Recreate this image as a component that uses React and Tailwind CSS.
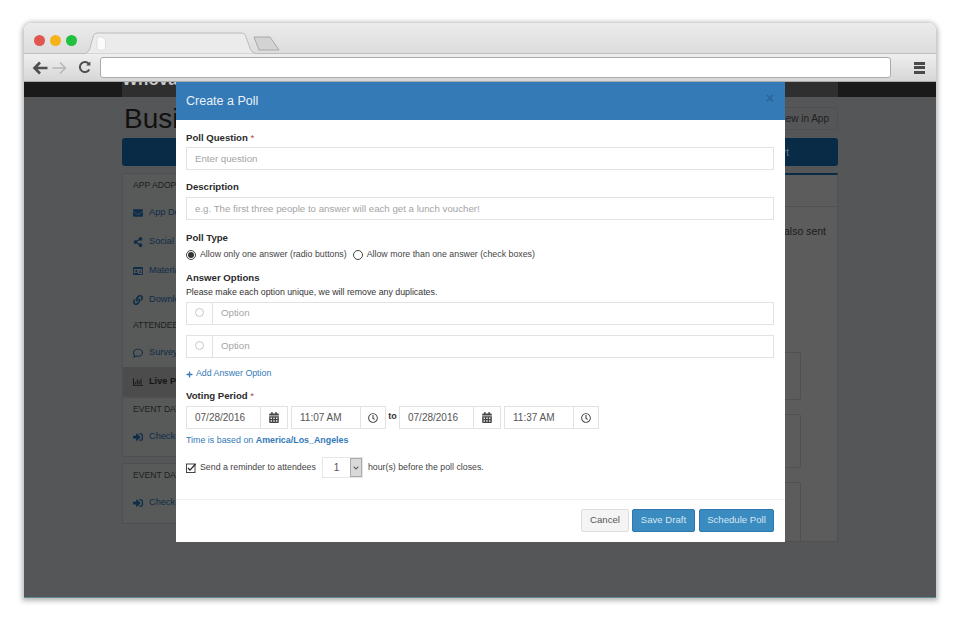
import React from "react";
import { FaEnvelope, FaShareAlt, FaRegIdCard, FaLink, FaRegComment, FaRegChartBar, FaSignInAlt, FaCalendarAlt, FaRegClock, FaPlus, FaChevronDown } from "react-icons/fa";

const Section = ({ title, className = "h-[24px] pb-[2px]" }) => (
  <div className={`flex items-center pl-[10px] text-[8.6px] text-[#1d1e1f] whitespace-nowrap ${className}`}>{title}</div>
);
const Item = ({ icon: Icon, label, active }) => (
  <div className={`h-[29px] flex items-center pl-[10px] gap-[6px] text-[9.2px] ${active ? "bg-[#4c4c4c] text-[#151515] font-bold" : "text-[#0f2d48]"}`}>
    <Icon className="w-[10px] h-[10px] shrink-0" />
    <span className="whitespace-nowrap">{label}</span>
  </div>
);
const Field = ({ placeholder }) => (
  <input readOnly placeholder={placeholder} className="block w-full h-[23px] border border-[#e0e2e5] px-[8px] text-[9.7px] text-[#555] placeholder:text-[#a4a4a4] outline-none bg-white" />
);
const Label = ({ children, req, className = "" }) => (
  <div className={`text-[9.6px] leading-[12px] font-bold text-[#2b2b2b] ${className}`}>
    {children}{req && <span className="text-[#a94442] font-normal"> *</span>}
  </div>
);
const OptionRow = () => (
  <div className="flex h-[23px] border border-[#e0e2e5]">
    <div className="w-[26px] shrink-0 border-r border-[#e0e2e5] flex justify-center pt-[5px]">
      <span className="w-[9px] h-[9px] rounded-full border border-[#c8c8c8]" />
    </div>
    <div className="flex-1 flex items-center pl-[8px] text-[9.7px] text-[#a4a4a4]">Option</div>
  </div>
);
const Radio = ({ checked, children }) => (
  <div className="flex items-center gap-[4px] text-[8.8px] text-[#444] whitespace-nowrap">
    <span className="w-[10px] h-[10px] rounded-full border border-[#444] flex items-center justify-center">
      {checked && <span className="w-[6px] h-[6px] rounded-full bg-[#333]" />}
    </span>
    {children}
  </div>
);
const Stamp = ({ value, icon: Icon, w, addon, iconSize }) => (
  <div className={`flex h-[23px] border border-[#e0e2e5] text-[10px] text-[#555] ${w}`}>
    <div className="flex-1 flex items-center pl-[8px] whitespace-nowrap">{value}</div>
    <div className={`border-l border-[#e0e2e5] flex items-center justify-center text-[#444] ${addon}`}>
      <Icon className={iconSize} />
    </div>
  </div>
);

export default function App() {
  return (
    <div className="w-[960px] h-[640px] bg-white pt-[23px] pl-[24px] overflow-hidden" style={{ fontFamily: '"Liberation Sans", Arial, sans-serif' }}>
      <div className="relative w-[912px] h-[575px] rounded-t-[8px] shadow-[0_1px_5px_2px_rgba(0,0,0,0.28)] border-b border-b-[#5f8a8e] flex flex-col">
        {/* title bar */}
        <div className="h-[31px] shrink-0 rounded-t-[8px] bg-gradient-to-b from-[#ececec] to-[#dcdcdc] border-b border-[#bdbdbd] relative flex items-start pl-[10px] pt-[12px] gap-[5px]">
          <span className="w-[11px] h-[11px] rounded-full bg-[#e0574f]" />
          <span className="w-[11px] h-[11px] rounded-full bg-[#f5b21b]" />
          <span className="w-[11px] h-[11px] rounded-full bg-[#22c03f]" />
          <svg className="absolute left-[60px] top-[9px]" width="200" height="22" viewBox="0 0 200 22" fill="none">
            <path d="M1 22 L2 20.5 C4 20 5 19 6 16 L9 5 C10 2 11 1 14 1 H157 C160 1 161 2 162 5 L166 16 C167 19 168 20.5 171 21 L172 22 Z" fill="#ebebeb" stroke="#bcbcbc" />
            <path d="M170 5 H186 L195 18 H175 Z" fill="#d3d3d3" stroke="#a8a8a8" strokeLinejoin="round" />
            <path d="M13 5 H18.5 L21.5 8 V18 H13 Z" fill="#fbfbfb" stroke="#dedede" />
          </svg>
        </div>
        {/* toolbar */}
        <div className="h-[28px] shrink-0 bg-gradient-to-b from-[#efefef] to-[#d6d6d6] border-b border-[#aaa] flex items-center pl-[8px] pr-[10px]">
          <svg width="16" height="14" viewBox="0 0 16 14" fill="none" stroke="#4f4f4f" strokeWidth="2.6"><path d="M15.5 7 H2.5 M8 1.5 L2.5 7 L8 12.5" /></svg>
          <svg className="ml-[4px]" width="16" height="14" viewBox="0 0 16 14" fill="none" stroke="#b5b5b5" strokeWidth="1.4"><path d="M0.5 7 H13.5 M8 1.5 L13.5 7 L8 12.5" /></svg>
          <svg className="ml-[10px]" width="13" height="13" viewBox="0 0 13 13" fill="none" stroke="#4f4f4f" strokeWidth="2"><path d="M11 3.2 A5 5 0 1 0 11.3 8.5" /><path d="M8 4.6 H12.4 V0.4 Z" fill="#4f4f4f" stroke="none" /></svg>
          <div className="ml-[9px] w-[791px] h-[21px] bg-white border border-[#aaa] rounded-[3px]" />
          <div className="ml-[23px] w-[11px] flex flex-col gap-[1.5px]">
            <span className="h-[3px] bg-[#4a4a4a]" /><span className="h-[3px] bg-[#4a4a4a]" /><span className="h-[3px] bg-[#4a4a4a]" />
          </div>
        </div>
        {/* dimmed page */}
        <div className="flex-1 bg-[#555657] overflow-hidden">
          <div className="h-[15px] bg-[#1a1a1a]">
            <div className="ml-[98px] w-[716px] h-[15px] bg-[#2f2f2f] overflow-hidden">
              <div className="text-[17px] leading-[17px] font-bold text-[#c9c9c9] mt-[-11px]">Whova</div>
            </div>
          </div>
          <div className="ml-[98px] w-[716px]">
            <div className="h-[41px] flex justify-between">
              <div className="text-[28px] leading-[32px] text-[#111] pt-[6px] pl-[2px]">Business</div>
              <div className="mt-[10px] h-[23px] px-[8px] border border-[#505050] rounded-[3px] flex items-center text-[10px] text-[#202020]">View in App</div>
            </div>
            <div className="h-[28px] rounded-[3px] bg-[#0a2b45] flex items-center justify-end pr-[49px] text-[10px] text-[#5f7485]">Export</div>
            <div className="flex gap-[14px] mt-[7px] items-start">
              <div className="w-[180px]">
                <div className="border border-[#4f4f4f] bg-[#585959] rounded-[2px]">
                  <Section title="APP ADOPTION" />
                  <Item icon={FaEnvelope} label="App Download" />
                  <Item icon={FaShareAlt} label="Social Media" />
                  <Item icon={FaRegIdCard} label="Materials" />
                  <Item icon={FaLink} label="Downloads" />
                  <Section title="ATTENDEE" className="h-[24px] pb-[1px]" />
                  <Item icon={FaRegComment} label="Surveys" />
                  <Item icon={FaRegChartBar} label="Live Polls" active />
                </div>
                <div className="border border-[#4f4f4f] bg-[#585959] rounded-[2px] pb-[5px]">
                  <Section title="EVENT DAY" />
                  <Item icon={FaSignInAlt} label="Check-in" />
                </div>
                <div className="border border-[#4f4f4f] bg-[#585959] rounded-[2px] mt-[6px] pb-[6px]">
                  <Section title="EVENT DAY" />
                  <Item icon={FaSignInAlt} label="Check-in" />
                </div>
              </div>
              <div className="flex-1 h-[369px] overflow-hidden bg-[#5b5c5b] border border-[#505050] border-t-2 border-t-[#0a2b45] pl-[12px] pr-[11px]">
                <div className="h-[32px] border-b border-[#505050] -ml-[12px] -mr-[11px]" />
                <div className="mt-[16px] text-[10.5px] leading-[16px] text-[#1c1c1c] text-right whitespace-nowrap">Polls are also sent</div>
                <div className="w-[392px] ml-auto mr-[25px] mt-[113px] flex flex-col gap-[14px]">
                  <div className="h-[48px] border border-[#505050] rounded-[2px]" />
                  <div className="h-[54px] border border-[#505050] rounded-[2px]" />
                  <div className="h-[59px] border border-[#505050] border-b-0 rounded-t-[2px]" />
                </div>
              </div>
            </div>
          </div>
        </div>

        {/* modal */}
        <div className="absolute left-[152px] top-[59px] w-[609px] h-[460px] bg-white flex flex-col">
          <div className="h-[38px] shrink-0 bg-[#337ab7] flex items-center justify-between pl-[10px] pr-[11px] text-[12.5px] text-[#eaf1f7]">
            <span>Create a Poll</span>
            <span className="text-[14px] leading-[14px] font-bold text-[#2a659a] mt-[-6px]">×</span>
          </div>
          <div className="flex-1 pl-[10px] pr-[11px] pt-[12px]">
            <Label req>Poll Question</Label>
            <div className="mt-[3px]"><Field placeholder="Enter question" /></div>
            <Label className="mt-[11px]">Description</Label>
            <div className="mt-[4px]"><Field placeholder="e.g. The first three people to answer will each get a lunch voucher!" /></div>
            <Label className="mt-[12px]">Poll Type</Label>
            <div className="mt-[5px] flex gap-[6px] h-[12px]">
              <Radio checked>Allow only one answer (radio buttons)</Radio>
              <Radio>Allow more than one answer (check boxes)</Radio>
            </div>
            <Label className="mt-[11px]">Answer Options</Label>
            <div className="mt-[2px] text-[8.8px] leading-[12px] text-[#333]">Please make each option unique, we will remove any duplicates.</div>
            <div className="mt-[4px]"><OptionRow /></div>
            <div className="mt-[10px]"><OptionRow /></div>
            <div className="mt-[10px] flex items-center gap-[3px] h-[12px] text-[8.8px] text-[#337ab7]">
              <FaPlus className="w-[7px] h-[7px]" /> Add Answer Option
            </div>
            <Label req className="mt-[10px]">Voting Period</Label>
            <div className="mt-[4px] flex items-start h-[23px]">
              <Stamp value="07/28/2016" icon={FaCalendarAlt} w="w-[102px]" addon="w-[27px]" iconSize="w-[10px] h-[11px]" />
              <div className="ml-[3px]"><Stamp value="11:07 AM" icon={FaRegClock} w="w-[95px]" addon="w-[25px]" iconSize="w-[10px] h-[10px]" /></div>
              <div className="w-[13px] text-center text-[9px] font-bold text-[#333] pt-[4px]">to</div>
              <Stamp value="07/28/2016" icon={FaCalendarAlt} w="w-[102px]" addon="w-[27px]" iconSize="w-[10px] h-[11px]" />
              <div className="ml-[3px]"><Stamp value="11:37 AM" icon={FaRegClock} w="w-[95px]" addon="w-[25px]" iconSize="w-[10px] h-[10px]" /></div>
            </div>
            <div className="mt-[5px] h-[12px] leading-[12px] text-[8.9px] text-[#337ab7]">Time is based on <b>America/Los_Angeles</b></div>
            <div className="mt-[11px] flex items-center h-[21px] text-[8.8px] text-[#444]">
              <svg width="10" height="10" viewBox="0 0 10 10" fill="none" className="shrink-0"><rect x="0.5" y="1" width="8.5" height="8.5" stroke="#444" /><path d="M2 5 L4 7.2 L9.5 1" stroke="#222" strokeWidth="1.2" /></svg>
              <span className="ml-[4px] whitespace-nowrap">Send a reminder to attendees</span>
              <div className="ml-[6px] w-[41px] h-[21px] border border-[#e6e6e6] flex">
                <div className="flex-1 text-center text-[10px] leading-[19px] text-[#555]">1</div>
                <div className="w-[12px] bg-[#d9d9d9] border border-[#aaa] flex items-center justify-center text-[#555]"><FaChevronDown className="w-[6px] h-[6px]" /></div>
              </div>
              <span className="ml-[5px] whitespace-nowrap">hour(s) before the poll closes.</span>
            </div>
          </div>
          <div className="h-[43px] shrink-0 border-t border-[#f0f0f0] flex justify-end items-start gap-[3px] pt-[9px] pr-[11px] text-[9.6px]">
            <div className="w-[48px] h-[23px] flex items-center justify-center bg-[#f4f4f4] border border-[#ddd] rounded-[2px] text-[#555]">Cancel</div>
            <div className="w-[63px] h-[23px] flex items-center justify-center bg-[#3a8bc0] border border-[#2e78ab] rounded-[2px] text-[#d8e6f0]">Save Draft</div>
            <div className="ml-[1px] w-[75px] h-[23px] flex items-center justify-center bg-[#3a8bc0] border border-[#2e78ab] rounded-[2px] text-[#d8e6f0]">Schedule Poll</div>
          </div>
        </div>
      </div>
    </div>
  );
}
